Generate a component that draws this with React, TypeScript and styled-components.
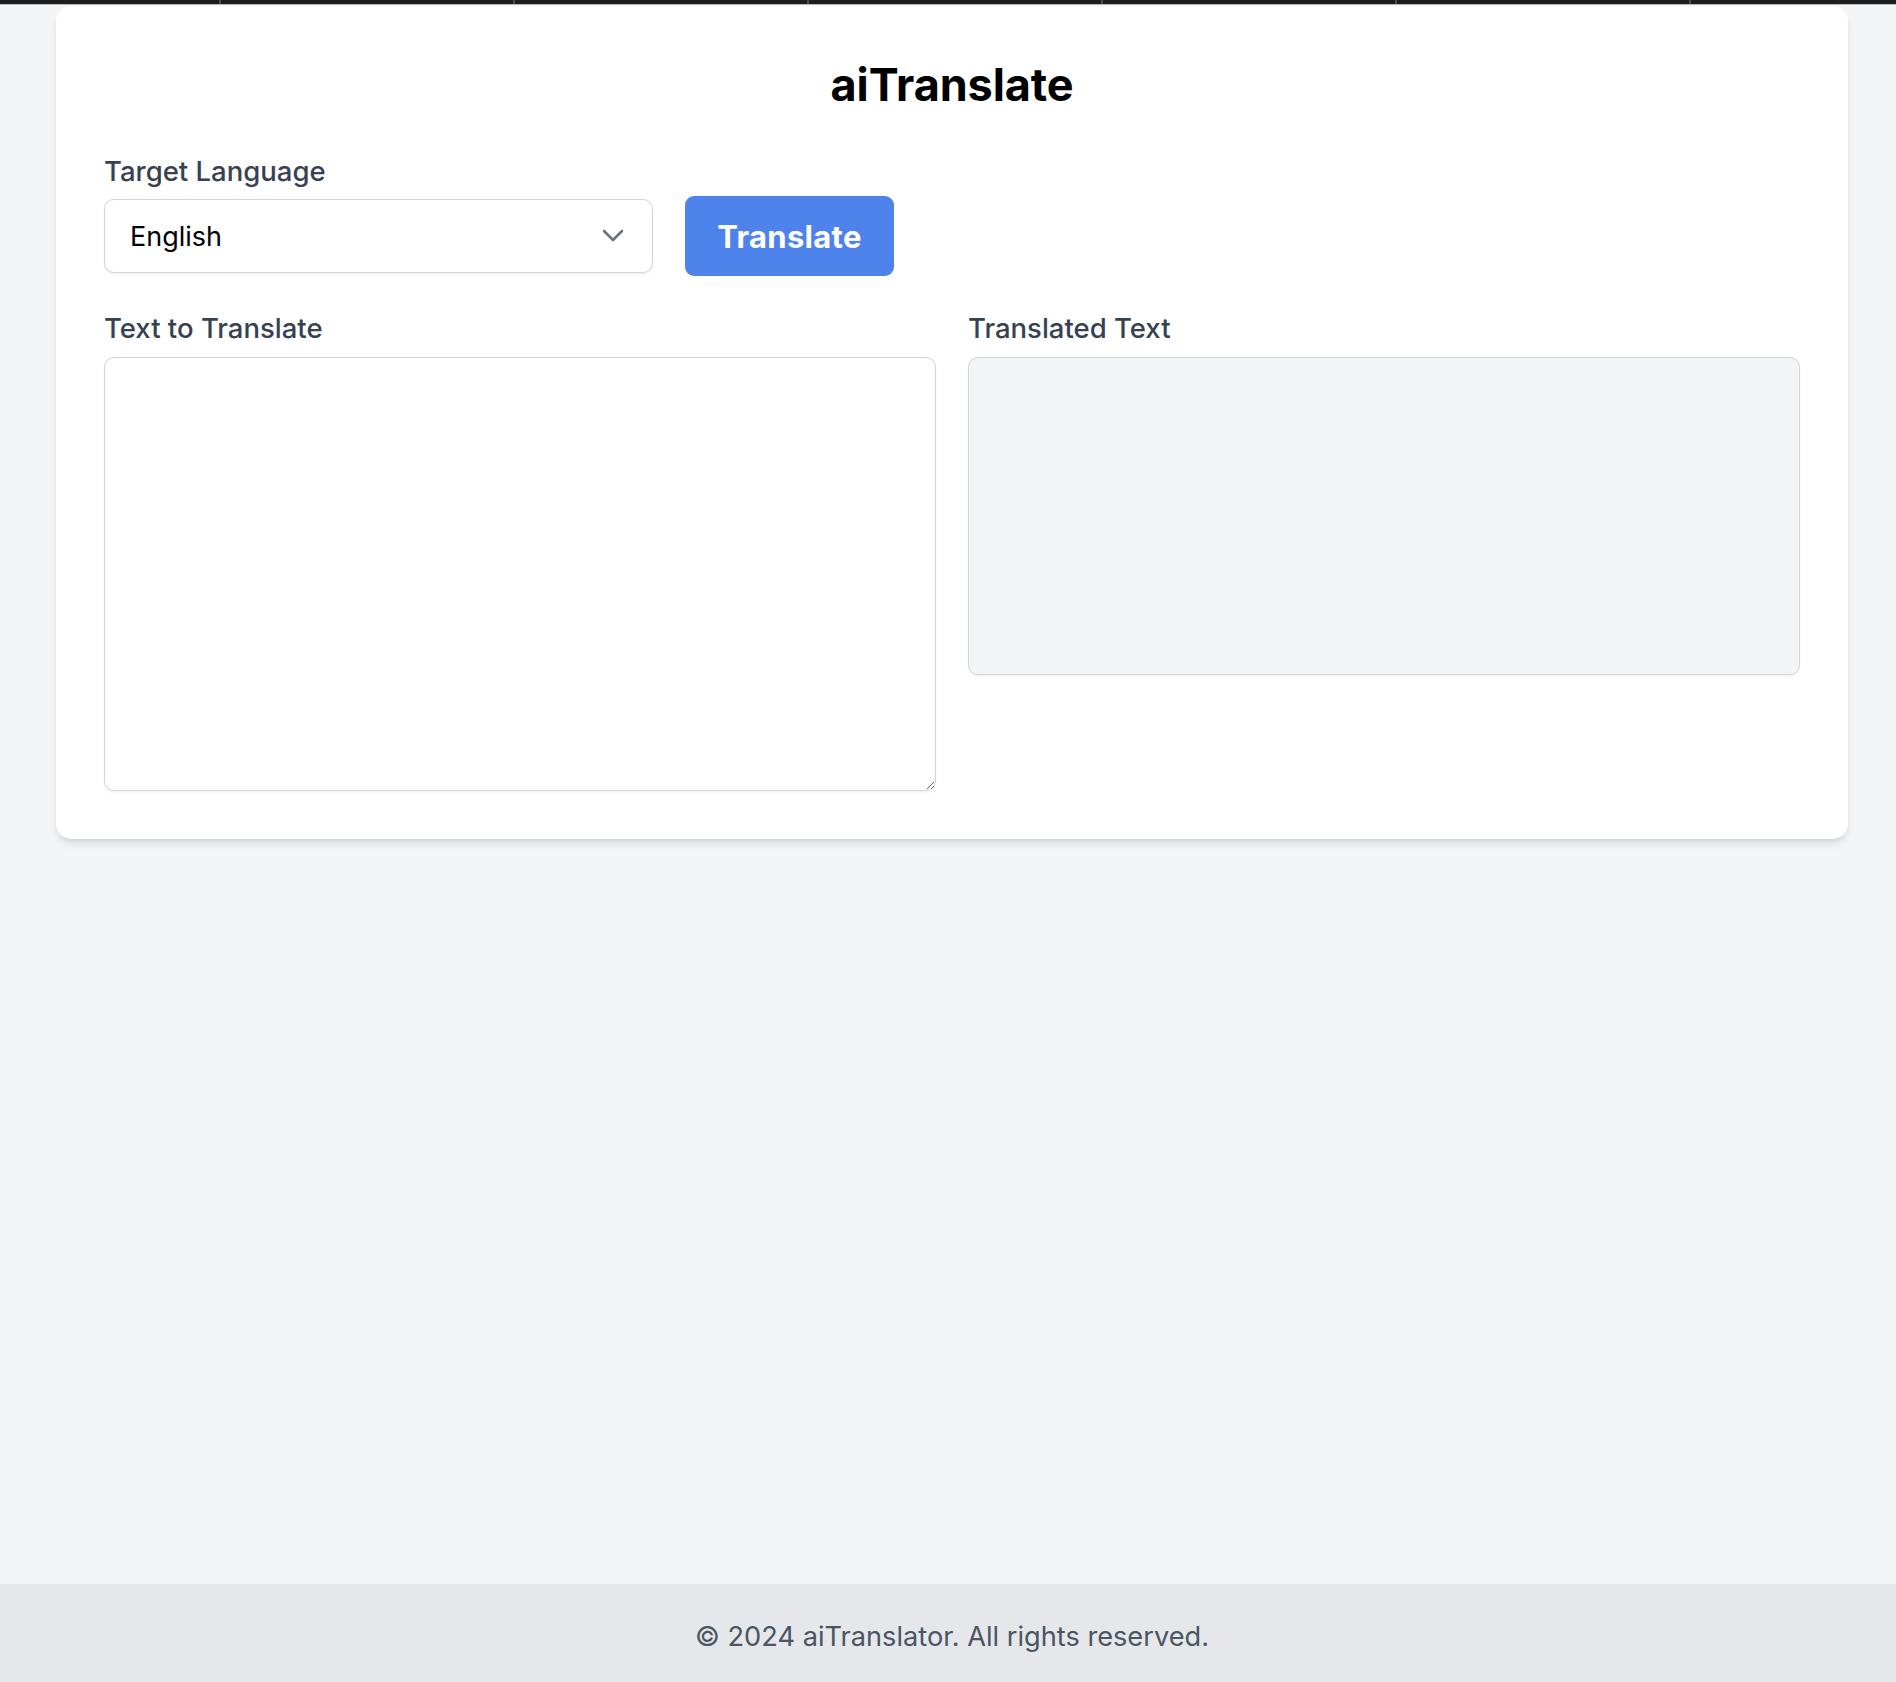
import React from "react";
import styled, { createGlobalStyle } from "styled-components";

const GlobalStyle = createGlobalStyle`
  html, body {
    margin: 0;
    padding: 0;
    overflow: hidden;
    background: #f3f4f6;
  }
  body {
    font-family: Inter, "Noto Sans", "Liberation Sans", sans-serif;
    -webkit-font-smoothing: antialiased;
  }
  * { box-sizing: border-box; }
`;

const Page = styled.div`
  width: 1904px;
  min-height: 1682px;
  display: flex;
  flex-direction: column;
  background: #f3f4f6;
`;

const BrowserStrip = styled.div`
  height: 5px;
  background: #1d1d1d;
  border-bottom: 1px solid #b9b9b9;
  display: flex;
  padding-left: 219px;
  overflow: hidden;
`;

const StripTab = styled.div`
  flex: 0 0 294px;
  height: 4px;
  border-left: 2px solid #4a4a4a;
`;

const Main = styled.main`
  flex: 1;
  padding: 1px 56px 0;
`;

const Card = styled.section`
  background: #ffffff;
  border-radius: 15px;
  box-shadow: 0 6px 9px -2px rgba(0, 0, 0, 0.1), 0 3px 6px -3px rgba(0, 0, 0, 0.1);
  padding: 52px 48px 48px;
`;

const Title = styled.h1`
  margin: 0 0 39px;
  text-align: center;
  font-size: 45px;
  line-height: 54px;
  font-weight: 700;
  color: #000;
  letter-spacing: -0.1px;
`;

const FieldLabel = styled.label<{ $gap: number }>`
  display: block;
  font-size: 27.5px;
  line-height: 40px;
  font-weight: 500;
  color: #374151;
  margin-bottom: ${(p) => p.$gap}px;
`;

const ControlsRow = styled.div`
  display: flex;
  align-items: center;
  gap: 32px;
  height: 80px;
`;

const SelectWrap = styled.div`
  position: relative;
  width: 549px;
`;

const LangSelect = styled.select`
  appearance: none;
  -webkit-appearance: none;
  width: 100%;
  height: 74px;
  padding: 0 60px 0 25px;
  font-family: inherit;
  font-size: 27px;
  color: #000;
  background: #fff;
  border: 1.5px solid #d1d5db;
  border-radius: 10px;
  box-shadow: 0 1.5px 3px rgba(0, 0, 0, 0.05);
  outline: none;
`;

const Chevron = styled.svg`
  position: absolute;
  right: 29px;
  top: 50%;
  width: 22px;
  height: 22px;
  margin-top: -12px;
  pointer-events: none;
`;

const TranslateButton = styled.button`
  height: 80px;
  width: 209px;
  border: none;
  border-radius: 9px;
  background: #4f83ec;
  color: #fff;
  font-family: inherit;
  font-size: 31px;
  font-weight: 700;
  letter-spacing: 0.3px;
  cursor: pointer;
`;

const Columns = styled.div`
  display: grid;
  grid-template-columns: 1fr 1fr;
  gap: 32px;
  margin-top: 32px;
  align-items: start;
`;

const Column = styled.div`
  display: flex;
  flex-direction: column;
`;

const SourceArea = styled.textarea`
  width: 100%;
  height: 434px;
  resize: vertical;
  padding: 12px 18px;
  font-family: inherit;
  font-size: 24px;
  border: 1.5px solid #d1d5db;
  border-radius: 10px;
  box-shadow: 0 1.5px 3px rgba(0, 0, 0, 0.05);
  background: #fff;
  outline: none;
`;

const OutputBox = styled.div`
  height: 318px;
  border: 1.5px solid #d1d5db;
  border-radius: 10px;
  background: #f3f4f6;
  box-shadow: 0 1.5px 3px rgba(0, 0, 0, 0.05);
`;

const Footer = styled.footer`
  height: 98px;
  background: #e5e7eb;
  display: flex;
  align-items: center;
  justify-content: center;
  padding-top: 6px;
  font-size: 27.2px;
  color: #4b5563;
`;

export default function App() {
  return (
    <>
      <GlobalStyle />
      <Page>
        <BrowserStrip>
          {Array.from({ length: 6 }).map((_, i) => (
            <StripTab key={i} />
          ))}
        </BrowserStrip>
        <Main>
          <Card>
            <Title>aiTranslate</Title>
            <FieldLabel $gap={5} htmlFor="lang">Target Language</FieldLabel>
            <ControlsRow>
              <SelectWrap>
                <LangSelect id="lang" defaultValue="English">
                  <option>English</option>
                  <option>Spanish</option>
                  <option>French</option>
                  <option>German</option>
                  <option>Chinese</option>
                  <option>Japanese</option>
                </LangSelect>
                <Chevron viewBox="0 0 22 22" fill="none">
                  <path d="M2 7 L11 16 L20 7" stroke="#6b7280" strokeWidth="2.6" strokeLinecap="round" strokeLinejoin="round" />
                </Chevron>
              </SelectWrap>
              <TranslateButton>Translate</TranslateButton>
            </ControlsRow>
            <Columns>
              <Column>
                <FieldLabel $gap={9} htmlFor="src">Text to Translate</FieldLabel>
                <SourceArea id="src" />
              </Column>
              <Column>
                <FieldLabel $gap={9}>Translated Text</FieldLabel>
                <OutputBox />
              </Column>
            </Columns>
          </Card>
        </Main>
        <Footer>© 2024 aiTranslator. All rights reserved.</Footer>
      </Page>
    </>
  );
}
